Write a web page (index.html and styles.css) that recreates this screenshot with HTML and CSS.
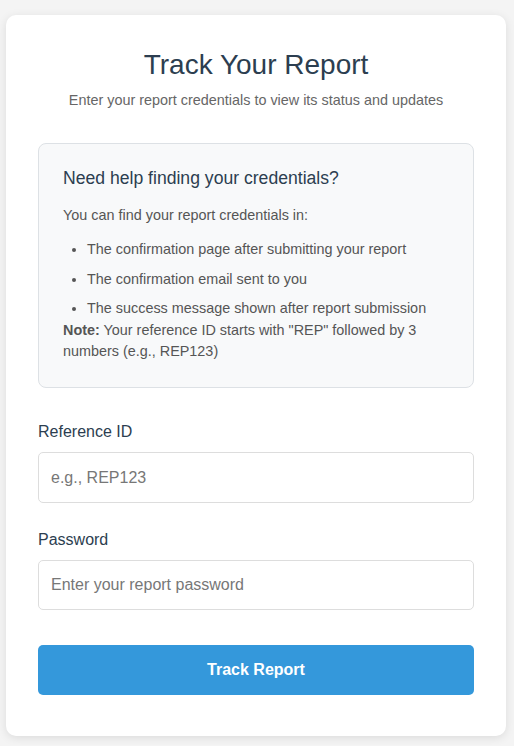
FILE: index.html
```html
<!DOCTYPE html>
<html lang="en">
<head>
<meta charset="utf-8">
<title>Track Your Report</title>
<link rel="stylesheet" href="styles.css">
</head>
<body>
<main class="card">
  <header class="header">
    <h1 class="title">Track Your Report</h1>
    <p class="subtitle">Enter your report credentials to view its status and updates</p>
  </header>
  <section class="help">
    <h3 class="help-title">Need help finding your credentials?</h3>
    <p class="help-text">You can find your report credentials in:</p>
    <ul class="help-list">
      <li>The confirmation page after submitting your report</li>
      <li>The confirmation email sent to you</li>
      <li>The success message shown after report submission</li>
    </ul>
    <p class="help-note"><strong>Note:</strong> Your reference ID starts with "REP" followed by 3 numbers (e.g., REP123)</p>
  </section>
  <form class="form">
    <div class="field">
      <label class="label" for="ref">Reference ID</label>
      <input class="input" id="ref" type="text" placeholder="e.g., REP123">
    </div>
    <div class="field">
      <label class="label" for="pw">Password</label>
      <input class="input input-last" id="pw" type="password" placeholder="Enter your report password">
    </div>
    <button class="btn" type="button">Track Report</button>
  </form>
</main>
</body>
</html>
```

FILE: styles.css
```css
* { box-sizing: border-box; }
html, body { margin: 0; padding: 0; }
body {
  background: #f4f4f4;
  font-family: "Liberation Sans", Arial, sans-serif;
  color: #333;
  padding: 15px 8px 9px 6px;
}
.card {
  width: 500px;
  background: #fff;
  border-radius: 10px;
  box-shadow: 0 2px 10px rgba(0,0,0,0.1);
  padding: 33px 32px 41px;
}
.header { text-align: center; margin-bottom: 34px; }
.title {
  margin: 0;
  font-size: 28px;
  font-weight: 400;
  color: #2c3e50;
  line-height: 34px;
}
.subtitle {
  margin: 9px 0 0;
  font-size: 14.4px;
  color: #666;
  line-height: 18px;
}
.help {
  background: #f8f9fa;
  border: 1px solid #dde1e5;
  border-radius: 8px;
  padding: 23px 24px 25px;
}
.help-title {
  margin: 0 0 16px;
  font-size: 17.6px;
  font-weight: 400;
  color: #2c3e50;
  line-height: 22px;
}
.help-text, .help-note {
  margin: 0;
  font-size: 14.4px;
  line-height: 21px;
  color: #555;
}
.help-note { margin-top: 1px; }
.help-note strong { color: #555; }
.help-list {
  margin: 13px 0 0;
  padding-left: 24px;
  font-size: 14.4px;
  line-height: 21px;
  color: #555;
}
.help-list li { margin-bottom: 8.5px; }
.help-list li:last-child { margin-bottom: 0; }
.form { margin-top: 35px; }
.field { margin-bottom: 28px; }
.field:last-of-type { margin-bottom: 35px; }
.label {
  display: block;
  font-size: 16px;
  line-height: 18px;
  color: #2c3e50;
  margin-bottom: 11px;
}
.input {
  display: block;
  width: 100%;
  height: 51px;
  padding: 0 12px;
  border: 1px solid #ddd;
  border-radius: 5px;
  font-family: "Liberation Sans", Arial, sans-serif;
  font-size: 16px;
  color: #333;
  background: #fff;
}
.input-last { height: 50px; }
.input::placeholder { color: #777; }
.btn {
  display: block;
  width: 100%;
  height: 50px;
  border: none;
  border-radius: 5px;
  background: #3498db;
  color: #fff;
  font-family: "Liberation Sans", Arial, sans-serif;
  font-size: 16px;
  font-weight: 700;
}
```
